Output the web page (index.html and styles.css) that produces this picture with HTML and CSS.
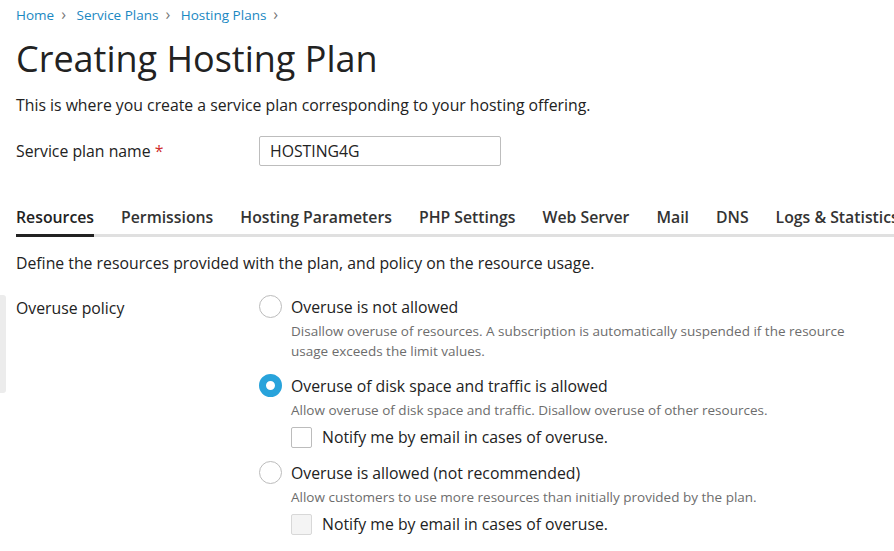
FILE: index.html
```html
<!DOCTYPE html>
<html lang="en">
<head>
  <meta charset="UTF-8" />
  <title>Creating Hosting Plan</title>
  <link rel="stylesheet" href="styles.css">
</head>
<body>
  <div class="page">
    <!-- breadcrumbs -->
    <nav class="breadcrumbs">
      <a href="#">Home</a><span class="sep">&rsaquo;</span>
      <a href="#">Service Plans</a><span class="sep">&rsaquo;</span>
      <a href="#">Hosting Plans</a><span class="sep">&rsaquo;</span>
    </nav>

    <h1 class="page-title">Creating Hosting Plan</h1>
    <p class="page-hint">This is where you create a service plan corresponding to your hosting offering.</p>

    <div class="form-row name-row">
      <label class="form-label">Service plan name <span class="required">*</span></label>
      <input class="text-input" type="text" value="HOSTING4G" />
    </div>

    <!-- tabs -->
    <ul class="tabs">
      <li class="tab active">Resources</li>
      <li class="tab">Permissions</li>
      <li class="tab">Hosting Parameters</li>
      <li class="tab">PHP Settings</li>
      <li class="tab">Web Server</li>
      <li class="tab">Mail</li>
      <li class="tab">DNS</li>
      <li class="tab">Logs &amp; Statistics</li>
    </ul>

    <p class="tab-hint">Define the resources provided with the plan, and policy on the resource usage.</p>

    <div class="form-row policy-row">
      <div class="form-label">Overuse policy</div>
      <div class="options">
        <div class="option">
          <span class="radio"></span>
          <div class="option-body">
            <div class="option-title">Overuse is not allowed</div>
            <div class="option-desc">Disallow overuse of resources. A subscription is automatically suspended if the resource usage exceeds the limit values.</div>
          </div>
        </div>

        <div class="option">
          <span class="radio checked"></span>
          <div class="option-body">
            <div class="option-title">Overuse of disk space and traffic is allowed</div>
            <div class="option-desc">Allow overuse of disk space and traffic. Disallow overuse of other resources.</div>
            <div class="check">
              <span class="checkbox"></span>
              <span>Notify me by email in cases of overuse.</span>
            </div>
          </div>
        </div>

        <div class="option">
          <span class="radio"></span>
          <div class="option-body">
            <div class="option-title">Overuse is allowed (not recommended)</div>
            <div class="option-desc">Allow customers to use more resources than initially provided by the plan.</div>
            <div class="check">
              <span class="checkbox disabled"></span>
              <span>Notify me by email in cases of overuse.</span>
            </div>
          </div>
        </div>
      </div>
    </div>
  </div>
</body>
</html>
```

FILE: styles.css
```css
/* base */
html, body {
  margin: 0;
  padding: 0;
  background: #fff;
  color: #222;
  font-family: "Open Sans", "Liberation Sans", Arial, sans-serif;
  font-size: 15.8px;
  overflow: hidden;
}
*, *::before, *::after {
  box-sizing: border-box;
}

.page {
  padding: 4px 0 0 16px;
}

/* breadcrumbs */
.breadcrumbs {
  font-size: 13.5px;
  line-height: 20px;
  white-space: nowrap;
}
.breadcrumbs a {
  color: #1a88c2;
  text-decoration: none;
}
.breadcrumbs .sep {
  color: #777;
  margin: 0 7px;
  font-size: 16px;
}

/* title */
.page-title {
  margin: 10px 0 0;
  font-size: 36px;
  font-weight: 400;
  line-height: 48px;
  color: #222;
}
.page-hint {
  margin: 11px 0 0;
  line-height: 22px;
}

/* form rows */
.form-row {
  display: flex;
}
.form-label {
  width: 243px;
  flex-shrink: 0;
}
.required {
  color: #d02d2d;
}
.name-row {
  margin-top: 20px;
  align-items: center;
}
.text-input {
  width: 242px;
  height: 30px;
  border: 1px solid #bdbdbd;
  border-radius: 2px;
  padding: 0 10px;
  font: inherit;
  color: #222;
}

/* tabs */
.tabs {
  list-style: none;
  margin: 40px 0 0;
  padding: 0;
  display: flex;
  gap: 27px;
  border-bottom: 3px solid #e0e0e0;
  white-space: nowrap;
}
.tab {
  flex-shrink: 0;
  font-weight: 600;
  color: #333;
  line-height: 22px;
  padding-bottom: 6px;
  margin-bottom: -3px;
  border-bottom: 3px solid transparent;
}
.tab.active {
  color: #222;
  border-bottom-color: #222;
}

.tab-hint {
  margin: 15px 0 0;
  line-height: 22px;
}

/* overuse policy */
.policy-row {
  position: relative;
  margin-top: 21px;
}
.policy-row::before {
  content: "";
  position: absolute;
  left: -16px;
  top: 0;
  width: 6px;
  height: 98px;
  background: #ececec;
  border-radius: 0 3px 3px 0;
}
.policy-row .form-label {
  line-height: 22px;
  padding-top: 2px;
}
.options {
  display: flex;
  flex-direction: column;
  gap: 13px;
}
.option {
  display: flex;
  gap: 9px;
}
.radio {
  width: 23px;
  height: 23px;
  border: 1px solid #bcbcbc;
  border-radius: 50%;
  flex-shrink: 0;
  background: #fff;
}
.radio.checked {
  border: 7px solid #28a3db;
}
.option-title {
  line-height: 25px;
}
.option-desc {
  font-size: 13.5px;
  color: #6d6d6d;
  line-height: 20px;
  margin-top: 1px;
  max-width: 570px;
}
.check {
  display: flex;
  align-items: center;
  gap: 10px;
  margin-top: 6px;
  line-height: 22px;
}
.checkbox {
  width: 21px;
  height: 21px;
  border: 1px solid #bcbcbc;
  border-radius: 2px;
  background: #fff;
  flex-shrink: 0;
}
.checkbox.disabled {
  background: #f4f4f4;
  border-color: #d8d8d8;
}
```
